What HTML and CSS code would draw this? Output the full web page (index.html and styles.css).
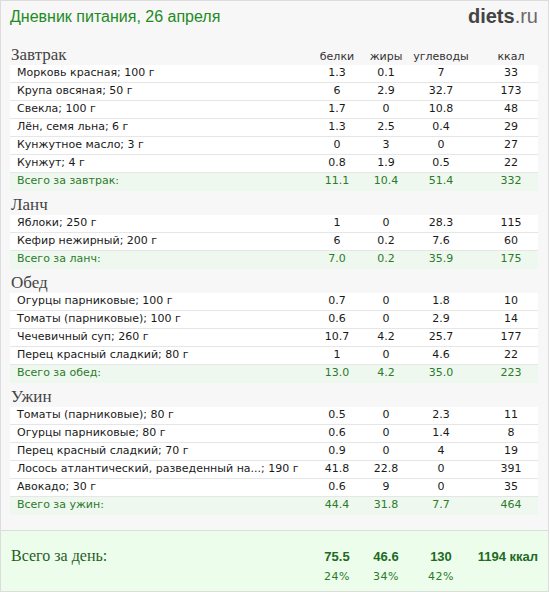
FILE: index.html
```html
<!DOCTYPE html>
<html lang="ru">
<head>
<meta charset="utf-8">
<title>Дневник питания</title>
<link rel="stylesheet" href="styles.css">
</head>
<body>
<div class="page">
  <div class="top">
    <div class="title">Дневник питания, 26 апреля</div>
    <div class="logo"><b>diets</b>.ru</div>
  </div>

  <div class="sections">
    <div class="head">
      <div class="meal">Завтрак</div>
      <div class="ch">белки</div><div class="ch">жиры</div><div class="ch">углеводы</div><div class="ch kc">ккал</div>
    </div>
    <div class="row"><div class="nm">Морковь красная; 100 г</div><div>1.3</div><div>0.1</div><div>7</div><div class="kc">33</div></div>
    <div class="row"><div class="nm">Крупа овсяная; 50 г</div><div>6</div><div>2.9</div><div>32.7</div><div class="kc">173</div></div>
    <div class="row"><div class="nm">Свекла; 100 г</div><div>1.7</div><div>0</div><div>10.8</div><div class="kc">48</div></div>
    <div class="row"><div class="nm">Лён, семя льна; 6 г</div><div>1.3</div><div>2.5</div><div>0.4</div><div class="kc">29</div></div>
    <div class="row"><div class="nm">Кунжутное масло; 3 г</div><div>0</div><div>3</div><div>0</div><div class="kc">27</div></div>
    <div class="row"><div class="nm">Кунжут; 4 г</div><div>0.8</div><div>1.9</div><div>0.5</div><div class="kc">22</div></div>
    <div class="row total"><div class="nm">Всего за завтрак:</div><div>11.1</div><div>10.4</div><div>51.4</div><div class="kc">332</div></div>

    <div class="head"><div class="meal">Ланч</div></div>
    <div class="row"><div class="nm">Яблоки; 250 г</div><div>1</div><div>0</div><div>28.3</div><div class="kc">115</div></div>
    <div class="row"><div class="nm">Кефир нежирный; 200 г</div><div>6</div><div>0.2</div><div>7.6</div><div class="kc">60</div></div>
    <div class="row total"><div class="nm">Всего за ланч:</div><div>7.0</div><div>0.2</div><div>35.9</div><div class="kc">175</div></div>

    <div class="head"><div class="meal">Обед</div></div>
    <div class="row"><div class="nm">Огурцы парниковые; 100 г</div><div>0.7</div><div>0</div><div>1.8</div><div class="kc">10</div></div>
    <div class="row"><div class="nm">Томаты (парниковые); 100 г</div><div>0.6</div><div>0</div><div>2.9</div><div class="kc">14</div></div>
    <div class="row"><div class="nm">Чечевичный суп; 260 г</div><div>10.7</div><div>4.2</div><div>25.7</div><div class="kc">177</div></div>
    <div class="row"><div class="nm">Перец красный сладкий; 80 г</div><div>1</div><div>0</div><div>4.6</div><div class="kc">22</div></div>
    <div class="row total"><div class="nm">Всего за обед:</div><div>13.0</div><div>4.2</div><div>35.0</div><div class="kc">223</div></div>

    <div class="head"><div class="meal">Ужин</div></div>
    <div class="row"><div class="nm">Томаты (парниковые); 80 г</div><div>0.5</div><div>0</div><div>2.3</div><div class="kc">11</div></div>
    <div class="row"><div class="nm">Огурцы парниковые; 80 г</div><div>0.6</div><div>0</div><div>1.4</div><div class="kc">8</div></div>
    <div class="row"><div class="nm">Перец красный сладкий; 70 г</div><div>0.9</div><div>0</div><div>4</div><div class="kc">19</div></div>
    <div class="row"><div class="nm">Лосось атлантический, разведенный на...; 190 г</div><div>41.8</div><div>22.8</div><div>0</div><div class="kc">391</div></div>
    <div class="row"><div class="nm">Авокадо; 30 г</div><div>0.6</div><div>9</div><div>0</div><div class="kc">35</div></div>
    <div class="row total"><div class="nm">Всего за ужин:</div><div>44.4</div><div>31.8</div><div>7.7</div><div class="kc">464</div></div>
  </div>

  <div class="day">
    <div class="daylabel">Всего за день:</div>
    <div class="dv">75.5<span class="pc">24%</span></div>
    <div class="dv">46.6<span class="pc">34%</span></div>
    <div class="dv">130<span class="pc">42%</span></div>
    <div class="dv dk">1194 ккал</div>
  </div>
</div>
</body>
</html>
```

FILE: styles.css
```css
html, body {
  margin: 0;
  padding: 0;
  background: #ffffff;
}

.page {
  box-sizing: border-box;
  width: 549px;
  height: 592px;
  border: 1px solid #dcdcdc;
  background: #f7f7f7;
  display: flex;
  flex-direction: column;
  font-family: "DejaVu Sans", Verdana, sans-serif;
  font-size: 11px;
  color: #1a1a1a;
}

.top {
  height: 40px;
  box-sizing: border-box;
  padding: 5px 10px 0 9px;
  display: flex;
  justify-content: space-between;
  align-items: flex-start;
}

.title {
  font-family: "Liberation Sans", Arial, sans-serif;
  font-size: 16px;
  line-height: 21px;
  color: #238a23;
}

.logo {
  font-family: "Liberation Sans", Arial, sans-serif;
  font-size: 20px;
  line-height: 22px;
  color: #6a6a6a;
  margin-top: -1px;
}

.logo b {
  color: #444444;
  font-weight: bold;
}

.sections {
  padding: 0 10px 0 9px;
}

.head,
.row {
  display: grid;
  grid-template-columns: 1fr 50px 48px 62px 66px;
  text-align: center;
}

.head {
  height: 24px;
  box-sizing: border-box;
  padding-top: 4px;
  align-items: start;
}

.meal {
  text-align: left;
  font-family: "Liberation Serif", "Times New Roman", serif;
  font-size: 17px;
  line-height: 20px;
  color: #444444;
  padding-left: 1px;
}

.ch {
  color: #333333;
  line-height: 15px;
  padding-top: 4px;
}

.kc {
  padding-left: 12px;
}

.row {
  background: #ffffff;
  line-height: 15px;
  padding-bottom: 2px;
  border-bottom: 1px solid #e6e6e6;
}

.nm {
  text-align: left;
  padding-left: 7px;
  white-space: nowrap;
}

.row.total {
  background: #eef8ee;
  color: #2c7a2c;
  border-bottom-color: #eef8ee;
}

.day {
  margin-top: auto;
  height: 61px;
  box-sizing: border-box;
  border-top: 1px solid #dcdcdc;
  background: #ecfdec;
  padding: 14px 10px 0 10px;
  display: grid;
  grid-template-columns: 1fr 50px 48px 62px 66px;
  align-items: start;
}

.daylabel {
  font-family: "Liberation Serif", "Times New Roman", serif;
  font-size: 16px;
  line-height: 20px;
  padding-top: 1px;
  color: #1f5f1f;
}

.dv {
  display: flex;
  flex-direction: column;
  align-items: center;
  font-family: "Liberation Sans", Arial, sans-serif;
  font-weight: bold;
  font-size: 13px;
  line-height: 15px;
  padding-top: 4px;
  color: #1f6a1f;
}

.dv.dk {
  align-items: flex-end;
}

.pc {
  font-family: "DejaVu Sans", Verdana, sans-serif;
  font-weight: normal;
  font-size: 11px;
  line-height: 14px;
  margin-top: 6px;
  color: #2a7a2a;
  letter-spacing: 0.5px;
}
```
